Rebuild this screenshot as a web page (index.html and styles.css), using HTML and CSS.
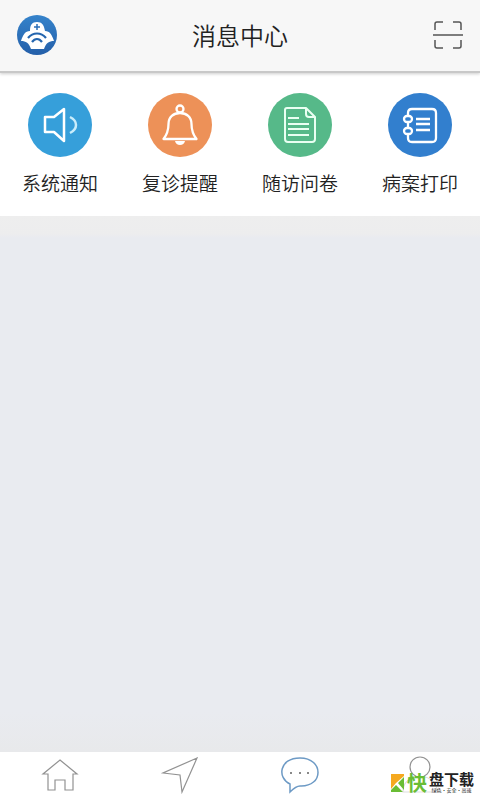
FILE: index.html
```html
<!DOCTYPE html>
<html lang="zh-CN">
<head>
<meta charset="utf-8">
<meta name="viewport" content="width=device-width, initial-scale=1">
<title>消息中心</title>
<link rel="stylesheet" href="styles.css">
</head>
<body>
<div class="app">
  <header class="topbar">
    <a class="brand" href="#" aria-label="主页">
      <svg width="40" height="40" viewBox="0 0 40 40">
        <defs><linearGradient id="sea" x1="0" y1="0" x2="0" y2="1"><stop offset="0" stop-color="#3583cb"/><stop offset="1" stop-color="#245fa9"/></linearGradient></defs>
        <circle cx="20" cy="20" r="20" fill="url(#sea)"/>
        <path fill="#fff" d="M20 7c5 0 7 3 8 9 5 0 7 4 9 10-5 0-8 2-10 8H14c-2-6-5-8-10-8 2-6 4-10 9-10 0-6 2-9 7-9Z"/>
        <path fill="none" stroke="#2b6fb8" stroke-width="1.500" d="M20 9v6M17 12h6"/>
        <path fill="none" stroke="#2465ae" stroke-width="2.200" d="M11 23c5-6 13-6 18 0M15 27c3-4 7-4 10 0"/>
      </svg>
    </a>
    <h1 class="title">消息中心</h1>
    <button class="scan" type="button" aria-label="扫一扫">
      <svg width="30" height="30" viewBox="0 0 30 30" fill="none" stroke="#555" stroke-width="1.500">
        <path d="M2 10V4q0-2 2-2h6M20 2h6q2 0 2 2v6M2 20v6q0 2 2 2h6M20 28h6q2 0 2-2v-6"/>
        <path d="M0 15h30"/>
      </svg>
    </button>
  </header>

  <nav class="actions" aria-label="消息分类">
    <a class="action" href="#">
      <svg class="disc" viewBox="0 0 64 64" fill="none" stroke="#fff" stroke-width="2.500" stroke-linejoin="round">
        <circle cx="32" cy="32" r="32" fill="#369fda" stroke="none"/>
        <path d="M17 24h9l10-8v32l-10-9h-9Z"/><path d="M42 24q6 3 6 8t-6 8" stroke="#c9edfb"/>
      </svg>
      <span>系统通知</span>
    </a>
    <a class="action" href="#">
      <svg class="disc" viewBox="0 0 64 64" fill="none" stroke="#fff" stroke-width="2.300" stroke-linejoin="round">
        <circle cx="32" cy="32" r="32" fill="#ed9158" stroke="none"/>
        <circle cx="32" cy="16" r="3.500"/>
        <path d="M15.500 46c4-5 5-9 5-15 0-7 5-11 11.500-11s11.500 4 11.500 11c0 6 1 10 5 15Z"/>
        <path d="M27 48h10q-1 4-5 4t-5-4Z" fill="#fff" stroke="none"/>
      </svg>
      <span>复诊提醒</span>
    </a>
    <a class="action" href="#">
      <svg class="disc" viewBox="0 0 64 64" fill="none" stroke="#e9fff2" stroke-width="2" stroke-linejoin="round">
        <circle cx="32" cy="32" r="32" fill="#56b989" stroke="none"/>
        <path d="M19 15h19l9 9v22q0 3-3 3H20q-3 0-3-3V17q0-2 2-2Z"/><path d="M38 15v6q0 3 3 3h6M20 25h11M20 31h21M20 36h21M20 42h21"/>
      </svg>
      <span>随访问卷</span>
    </a>
    <a class="action" href="#">
      <svg class="disc" viewBox="0 0 64 64" fill="none" stroke="#fff" stroke-width="2.300">
        <circle cx="32" cy="32" r="32" fill="#327fce" stroke="none"/>
        <path d="M20 22v-2q0-4 4-4h20q4 0 4 4v25q0 4-4 4H24q-4 0-4-4v-3M20 30v4M28 26h14M28 31h14M28 37h14"/>
        <rect x="16" y="23" width="8" height="6" rx="3"/><rect x="16" y="35" width="8" height="6" rx="3"/>
      </svg>
      <span>病案打印</span>
    </a>
  </nav>

  <main class="messages"></main>

  <footer class="dock">
    <nav class="tabs" aria-label="主导航">
      <a class="tab" href="#">
        <svg class="glyph" viewBox="0 0 40 40"><path d="M20 4 37 18H33V34H25V24H15V34H8V18H3Z"/></svg>
        <span>首页</span>
      </a>
      <a class="tab" href="#">
        <svg class="glyph" viewBox="0 0 40 40"><path d="M37 2 3 17l17 2 2 17Z"/></svg>
        <span>导航</span>
      </a>
      <a class="tab current" href="#" aria-current="page">
        <svg class="glyph" viewBox="0 0 40 40"><path d="M10 28C-3 22-1 2 20 2c24 0 24 29 0 28q-4 0-10 6Z"/><path class="dots" d="M10 16h2v2h-2ZM19 16h2v2h-2ZM27 16h2v2h-2Z"/></svg>
        <span>消息</span>
      </a>
      <a class="tab" href="#">
        <svg class="glyph" viewBox="0 0 40 40"><circle cx="20" cy="11" r="10"/><path class="faint" d="M15 21C7 23 3 28 3 36h34c0-8-4-13-12-15"/></svg>
        <span>我的</span>
      </a>
    </nav>
    <a class="download" href="#">
      <svg width="14" height="18" viewBox="0 0 14 18"><path fill="#f5a91f" d="M0 0h3v6L9 0h4v2L5 9l-5 6Z"/><path fill="#f5a91f" d="M3 0h8L3 7Z"/><path fill="#6abd35" d="M13 3v13L7 9ZM0 18v-2l5-5 7 7Z"/></svg>
      <span class="quick">快</span>
      <span class="words"><b>盘下载</b><small>绿色·安全·高速</small></span>
    </a>
  </footer>
</div>
</body>
</html>
```

FILE: styles.css
```css
* { box-sizing: border-box; }

body {
  margin: 0;
  font-family: "Noto Sans CJK SC", sans-serif;
  color: #222;
}

a { color: inherit; text-decoration: none; }
svg { display: block; }

.app {
  display: flex;
  flex-direction: column;
  height: 100vh;
  overflow: hidden;
  background: #e9ebf0;
}

.topbar {
  display: grid;
  grid-template-columns: 1fr auto 1fr;
  align-items: center;
  padding: 15px 17px 16px;
  background: #f7f7f7;
  border-bottom: 2px solid #c8c8c8;
  box-shadow: 0 1px 3px rgba(0, 0, 0, 0.2);
  z-index: 1;
}

.brand { justify-self: start; }

.title {
  margin: 0;
  font-size: 24px;
  line-height: 40px;
  font-weight: 350;
}

.scan {
  justify-self: end;
  padding: 0;
  border: 0;
  background: none;
}

.actions {
  display: grid;
  grid-template-columns: repeat(4, 1fr);
  padding: 20px 0 19px;
  background: #fff;
}

.action {
  display: flex;
  flex-direction: column;
  align-items: center;
  gap: 12px;
  font-size: 19px;
  line-height: 28px;
  font-weight: 350;
}

.disc { width: 64px; height: 64px; }

.messages {
  flex: 1;
  background: linear-gradient(#eeeeee, #ededee 18px, #e9ebf0 22px, #e9ebf0 calc(100% - 40px), #e8e9eb);
}

.dock {
  position: relative;
  height: 48px;
  background: #fff;
}

.tabs {
  display: grid;
  grid-template-columns: repeat(4, 1fr);
  height: 100%;
  overflow: hidden;
}

.tab {
  display: flex;
  flex-direction: column;
  align-items: center;
  padding-top: 4px;
  font-size: 14px;
  line-height: 20px;
  color: #888;
}

.glyph {
  flex: none;
  width: 40px;
  height: 40px;
  fill: none;
  stroke: #929292;
  stroke-width: 1.2;
}

.current { color: #5a91c8; }
.current .glyph { stroke: #6d9ac5; stroke-width: 1.5; }
.current .dots { fill: #888; stroke: none; }
.faint { stroke: #ddd; }

.download {
  position: absolute;
  right: 6px;
  bottom: 6px;
  display: flex;
  align-items: center;
  gap: 2px;
  color: #222;
}

.quick {
  font-size: 20px;
  line-height: 20px;
  font-weight: 700;
  color: #6abd35;
}

.words {
  display: flex;
  flex-direction: column;
  align-items: center;
}

.words b { font-size: 15px; line-height: 15px; font-weight: 700; }
.words small { font-size: 5px; line-height: 8px; white-space: nowrap; }
```
